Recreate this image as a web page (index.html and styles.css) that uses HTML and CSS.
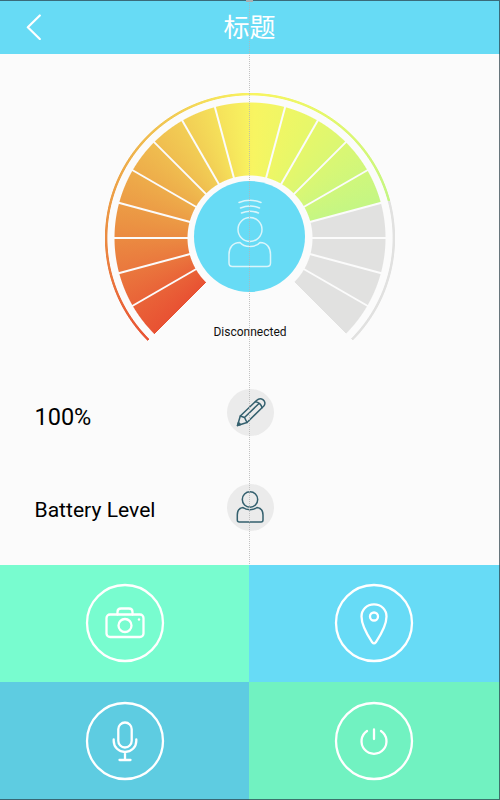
FILE: index.html
```html
<!DOCTYPE html>
<html lang="en">
<head>
  <meta charset="UTF-8" />
  <meta name="viewport" content="width=device-width, initial-scale=1.0" />
  <title>标题</title>
  <link rel="stylesheet" href="styles.css">
</head>
<body>
  <div class="screen">
    <header class="topbar">
      <svg class="back" width="16" height="26" viewBox="0 0 16 26"><path d="M13.800 1.500 1.800 13.300l12 11.700" /></svg>
      <h1>标题</h1>
    </header>

    <main class="panel">
      <div class="gauge">
        <div class="sweep"></div>
        <svg class="spokes" width="290" height="290" viewBox="-145 -145 290 290">
          <g id="spokes"></g>
        </svg>
        <div class="hub">
          <svg width="111" height="111" viewBox="0 0 111 111">
            <path d="M45 21.500q11-4.500 22 0M46.500 27q9.500-4 19 0M47.500 32q8.500-3.500 17 0" />
            <circle cx="56" cy="48.500" r="12" />
            <path d="M46 61.500C38.500 61.500 35 67 35 73.500V82q0 3.500 3.500 3.500H73q3.500 0 3.500-3.500V73.500C76.500 67 73 61.500 66 61.500 62 66.800 50 66.800 46 61.500Z" />
          </svg>
        </div>
      </div>
      <p class="status">Disconnected</p>

      <div class="row row-level">
        <span class="level">100%</span>
        <div class="round">
          <svg width="47" height="47" viewBox="0 0 47 47">
            <path d="M10.500 36.500 13.300 27 29.500 11.500C34 7 40.500 12.500 36.800 17L20 33.500Z" />
            <path d="M13.300 27 17.500 28.500 20 33.500M28.500 12.700C31.500 13 34.500 15.500 35 18.800M17.500 28.500 32 14.500" />
            <path class="tip" d="M10.500 36.500l1-3 2 2z" />
          </svg>
        </div>
      </div>
      <div class="row row-battery">
        <span class="label">Battery Level</span>
        <div class="round">
          <svg width="47" height="47" viewBox="0 0 47 47">
            <circle cx="23" cy="15.500" r="7.700" />
            <path d="M16 23.500C12 24 10.300 27 10.300 31V36q0 2 2 2H34q2 0 2-2V31C36 27 34 24 30 23.500 26.500 26.500 19.500 26.500 16 23.500Z" />
          </svg>
        </div>
      </div>
    </main>

    <nav class="tiles">
      <a class="tile camera">
        <svg width="80" height="80" viewBox="-40 -40 80 80">
          <circle class="rim" r="38" />
          <rect x="-18.500" y="-8.500" width="37" height="22.500" rx="3.500" />
          <path d="M-7.500-8.500v-2.500q0-3.500 3.500-3.500h8q3.500 0 3.500 3.500v2.500" />
          <circle cy="2.500" r="6.500" />
          <circle class="dot" cx="14" cy="-3.500" r="1.200" />
        </svg>
      </a>
      <a class="tile place">
        <svg width="80" height="80" viewBox="-40 -40 80 80">
          <circle class="rim" r="38" />
          <path d="M0-18.700C-7.500-18.700-12.500-13-12.500-6.500-12.500 3-6 13-1.800 19.300Q0 21.500 1.800 19.300C6 13 12.500 3 12.500-6.500 12.500-13 7.500-18.700 0-18.700Z" />
          <circle cy="-6.500" r="4" />
        </svg>
      </a>
      <a class="tile mic">
        <svg width="80" height="80" viewBox="-40 -40 80 80">
          <circle class="rim" r="38" />
          <rect x="-6.700" y="-18.500" width="13.400" height="25" rx="6.700" />
          <path d="M-11.300-1.500v1.500a11.300 11 0 0 0 22.600 0v-1.500M0 11v8M-5.500 19h11" />
        </svg>
      </a>
      <a class="tile power">
        <svg width="80" height="80" viewBox="-40 -40 80 80">
          <circle class="rim" r="38" />
          <path d="M-7-10a12.500 12.500 0 1 0 14 0M0-11.500v9.500" />
        </svg>
      </a>
    </nav>
    <div class="guide"></div>
  </div>

  <script>
    const spokes = document.getElementById('spokes');

    // one gap every 15 degrees between the 18 segments
    for (let a = -120; a <= 120; a += 15) {
      const line = document.createElementNS('http://www.w3.org/2000/svg', 'line');
      line.setAttribute('y1', -61);
      line.setAttribute('y2', -137);
      line.setAttribute('transform', `rotate(${a})`);
      if (a !== 0) spokes.appendChild(line);
    }
  </script>
</body>
</html>
```

FILE: styles.css
```css
* {
  box-sizing: border-box;
}
body {
  margin: 0;
  background: #fbfbfb;
  color: #111;
  font-family: Roboto, "Noto Sans CJK SC", sans-serif;
}
svg {
  display: block;
  fill: none;
  stroke-linecap: round;
  stroke-linejoin: round;
}
.screen {
  position: relative;
  width: 500px;
  height: 800px;
  overflow: hidden;
}
/* thin frame on the top, right and bottom edges */
.screen::after {
  content: "";
  position: absolute;
  inset: 0;
  border: solid rgba(40, 60, 70, 0.7);
  border-width: 1px 1px 1px 0;
}
.topbar {
  display: grid;
  grid-template-columns: 60px 1fr 60px;
  align-items: center;
  height: 53.5px;
  padding-right: 1px;
  background: #67dbf5;
}
.back {
  margin-left: 26px;
  stroke: #fff;
  stroke-width: 2.2;
}
h1 {
  margin: 0;
  padding-bottom: 2px;
  color: #fff;
  font-family: "Noto Sans CJK SC", sans-serif;
  font-size: 26px;
  font-weight: 400;
  line-height: 50px;
  text-align: center;
}
.panel {
  height: 511px;
  padding-top: 39.5px;
}
.gauge {
  display: grid;
  place-items: center;
  width: 290px;
  height: 290px;
  margin-left: 104.5px;
}
.gauge > * {
  grid-area: 1 / 1;
}
.sweep {
  width: 290px;
  height: 290px;
  background: conic-gradient(from 225deg,
    #e85233 0deg, #e96338 15deg, #ea7a3e 32deg, #eb9343 52deg,
    #eeb24c 80deg, #f2cf55 106deg, #f6e65c 124deg, #f8f561 137deg,
    #e9f768 160deg, #d9f774 182deg, #c4f684 210deg,
    #e1e1e0 210deg 270deg, transparent 270deg);
  -webkit-mask: radial-gradient(circle, transparent 62px, #000 63px 135px, transparent 136px 142.2px, #000 143px 144.7px, transparent 145.5px);
  mask: radial-gradient(circle, transparent 62px, #000 63px 135px, transparent 136px 142.2px, #000 143px 144.7px, transparent 145.5px);
}
/* keeps the gaps above the masked sweep */
.spokes {
  position: relative;
  stroke: #fbfbfb;
  stroke-width: 2;
}
.spokes line {
  stroke-linecap: butt;
}
.hub {
  width: 111px;
  height: 111px;
  margin-top: -3px;
  border-radius: 50%;
  background: #67dbf5;
}
.hub svg {
  stroke: #d9f5fb;
  stroke-width: 1.5;
}
.status {
  margin: -59px 0 0;
  font-size: 12px;
  line-height: 16px;
  text-align: center;
}
.row {
  display: grid;
  grid-template-columns: 192px 47px;
  align-items: center;
  height: 47px;
  padding-left: 34.5px;
  color: #000;
}
.row-level {
  margin-top: 49px;
}
.row-battery {
  margin-top: 48px;
}
.level {
  padding-top: 8px;
  font-size: 23.5px;
}
.label {
  padding-top: 4px;
  font-size: 21.1px;
}
.round {
  border-radius: 50%;
  background: #ebebeb;
}
.round svg {
  stroke: #34606e;
  stroke-width: 1.5;
}
.round .tip {
  fill: #34606e;
}
.tiles {
  display: grid;
  grid-template-columns: 249px 251px;
  grid-template-rows: 117.5px 118px;
}
.tile {
  display: grid;
  place-items: center;
}
.tile:nth-child(even) {
  padding-right: 1px;
}
.tile svg {
  stroke: #fff;
  stroke-width: 2.3;
}
.tile .dot {
  fill: #fff;
  stroke: none;
}
.camera { background: #78fccf; }
.place { background: #67dbf6; }
.mic { background: #5ecce1; }
.power { background: #71f2c1; }

/* centre guide line with its handle at the top */
.guide {
  position: absolute;
  top: 0;
  left: 249px;
  height: 564px;
  border-left: 1px dotted rgba(180, 180, 180, 0.8);
}
.guide::before {
  content: "";
  position: absolute;
  top: 0;
  left: -4px;
  z-index: 1;
  width: 7px;
  height: 2px;
  background: #a9b0b3;
}
```
